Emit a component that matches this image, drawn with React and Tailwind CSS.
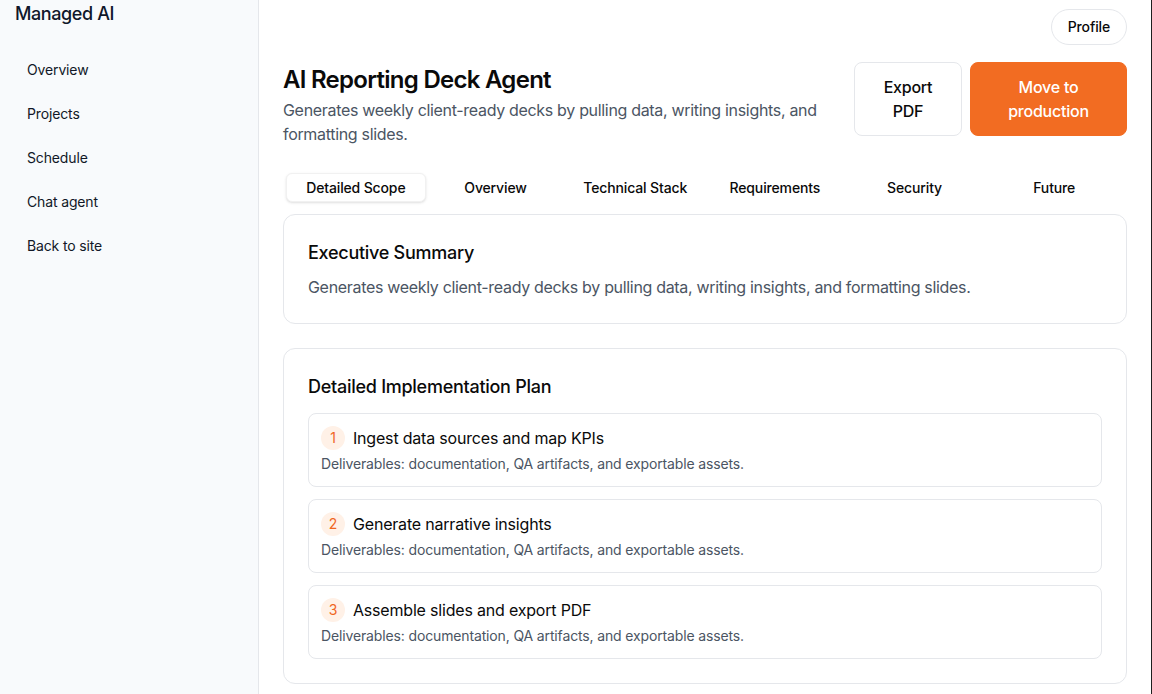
import React, { useState } from 'react'

const NAV = ['Overview', 'Projects', 'Schedule', 'Chat agent', 'Back to site']

const TABS = [
  'Detailed Scope',
  'Overview',
  'Technical Stack',
  'Requirements',
  'Security',
  'Future',
]

const STEPS = [
  'Ingest data sources and map KPIs',
  'Generate narrative insights',
  'Assemble slides and export PDF',
]

const Sidebar = () => (
  <aside className="w-[259px] shrink-0 border-r border-[#e5e7eb] bg-[#f8fafc] px-[15px]">
    <div className="text-lg leading-7 font-medium tracking-[-0.022em] text-[#0f172a]">
      Managed AI
    </div>
    <nav className="mt-5 flex flex-col">
      {NAV.map(item => (
        <a key={item} className="px-3 py-3 text-sm leading-5 tracking-[-0.01em] text-[#111827]">
          {item}
        </a>
      ))}
    </nav>
  </aside>
)

const Step = ({ n, title }) => (
  <div className="rounded-lg border border-[#e5e7eb] px-3 py-3">
    <div className="flex items-center gap-2">
      <span className="flex h-6 w-6 items-center justify-center rounded-full bg-[#fff1e7] text-sm text-[#f0661f]">
        {n}
      </span>
      <span className="text-base leading-6 tracking-[-0.012em] text-[#0a0a0a]">{title}</span>
    </div>
    <p className="mt-1 text-sm leading-5 tracking-[-0.01em] text-[#4b5563]">
      Deliverables: documentation, QA artifacts, and exportable assets.
    </p>
  </div>
)

export default function App() {
  const [tab, setTab] = useState('Detailed Scope')

  return (
    <div
      className="flex h-[694px] overflow-hidden bg-white"
      style={{ fontFamily: 'Inter, "Noto Sans", sans-serif' }}
    >
      <Sidebar />
      <main className="flex-1 border-r border-[#1f1f1f] px-6">
        <div className="flex justify-end pt-[9px]">
          <button className="h-9 rounded-full border border-[#e5e7eb] px-4 text-sm font-medium tracking-[-0.01em] text-[#0a0a0a]">
            Profile
          </button>
        </div>

        <div className="mt-[17px] flex items-start gap-4">
          <div className="flex-1">
            <h1 className="mt-[2px] text-2xl leading-8 font-semibold tracking-[-0.03em] text-[#0a0a0a]">
              AI Reporting Deck Agent
            </h1>
            <p className="mt-[2px] text-base leading-6 tracking-[-0.02em] text-[#4b5563]">
              Generates weekly client-ready decks by pulling data, writing insights, and
              formatting slides.
            </p>
          </div>
          <div className="flex gap-2">
            <button className="w-[108px] rounded-lg border border-[#e5e7eb] bg-white py-3 text-base leading-6 font-medium tracking-[-0.015em] text-[#0a0a0a]">
              Export
              <br />
              PDF
            </button>
            <button className="w-[157px] rounded-lg border border-[#f26c22] bg-[#f26c22] py-3 text-base leading-6 font-medium tracking-[-0.015em] text-white">
              Move to
              <br />
              production
            </button>
          </div>
        </div>

        <div className="mt-6 flex h-9 rounded-lg p-[3px]">
          {TABS.map(t => (
            <button
              key={t}
              onClick={() => setTab(t)}
              className={
                t === tab
                  ? 'h-[calc(100%-1px)] flex-1 rounded-md border border-[#f1f1f1] bg-white px-2 text-sm font-medium tracking-[-0.01em] text-[#0a0a0a] shadow-sm'
                  : 'h-[calc(100%-1px)] flex-1 rounded-md border border-transparent px-2 text-sm font-medium tracking-[-0.01em] text-[#0a0a0a]'
              }
            >
              {t}
            </button>
          ))}
        </div>

        <section className="mt-2 rounded-xl border border-[#e5e7eb] p-6">
          <h2 className="text-lg leading-7 font-medium tracking-[-0.015em] text-[#0a0a0a]">
            Executive Summary
          </h2>
          <p className="mt-2 text-base leading-6 tracking-[-0.02em] text-[#4b5563]">
            Generates weekly client-ready decks by pulling data, writing insights, and formatting
            slides.
          </p>
        </section>

        <section className="mt-6 rounded-xl border border-[#e5e7eb] p-6">
          <h2 className="text-lg leading-7 font-medium tracking-[-0.015em] text-[#0a0a0a]">
            Detailed Implementation Plan
          </h2>
          <div className="mt-3 flex flex-col gap-3">
            {STEPS.map((s, i) => (
              <Step key={s} n={i + 1} title={s} />
            ))}
          </div>
        </section>
      </main>
    </div>
  )
}
